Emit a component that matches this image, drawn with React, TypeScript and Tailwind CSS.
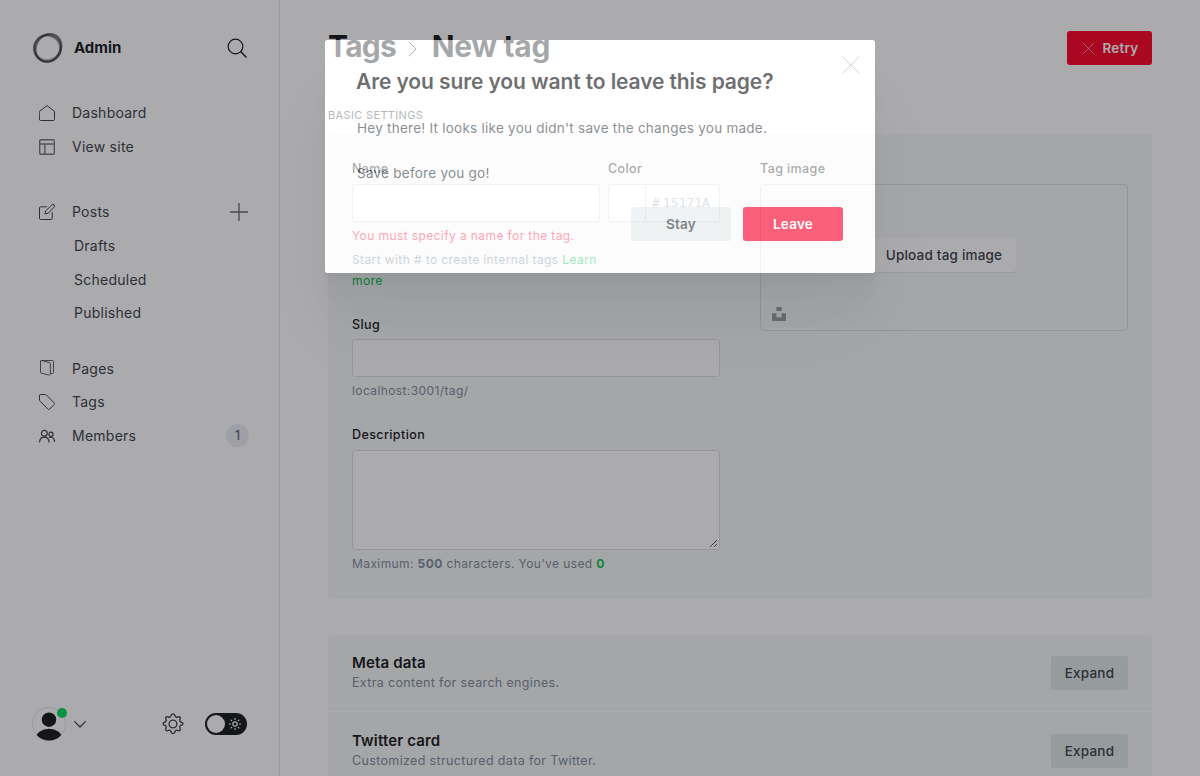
import React from "react";

const line = { fill: "none", stroke: "currentColor", strokeLinecap: "round", strokeLinejoin: "round" } as const;

function Logo() {
  return (
    <svg width="32" height="32" viewBox="0 0 32 32" fill="none" stroke="#15171a">
      <ellipse cx="15.4" cy="16.4" rx="13.6" ry="13.4" strokeWidth="1.8" opacity=".55" />
      <ellipse cx="17" cy="15.4" rx="14" ry="12.4" strokeWidth="1.8" opacity=".3" transform="rotate(-40 16 16)" />
      <ellipse cx="16.2" cy="16" rx="12.2" ry="14.2" strokeWidth="2" opacity=".3" transform="rotate(30 16 16)" />
      <ellipse cx="16.4" cy="16.2" rx="14.4" ry="11.9" strokeWidth="1.8" opacity=".25" transform="rotate(-62 16 16)" />
      <ellipse cx="15.1" cy="16.6" rx="12.5" ry="12.6" strokeWidth="1.2" opacity=".35" />
    </svg>
  );
}

const icons = {
  home: <path {...line} d="M.5 6.3 8 .6l7.5 5.7v8.2a1 1 0 0 1-1 1h-13a1 1 0 0 1-1-1z" />,
  site: (
    <g {...line} strokeWidth="1.4" opacity=".7">
      <rect x=".7" y=".7" width="14.6" height="14.6" rx="1.2" />
      <path d="M.7 5h14.6M5.8 5v10.3" />
    </g>
  ),
  posts: (
    <g {...line}>
      <path d="M7.5 2.8H1.6A1.1 1.1 0 0 0 .5 3.9v10.5a1.1 1.1 0 0 0 1.1 1.1h10.5a1.1 1.1 0 0 0 1.1-1.1V8.6" />
      <path d="m8.9 9.3-3 .7.7-3L12.9.9a1.5 1.5 0 0 1 2.2 2.2z" />
    </g>
  ),
  pages: (
    <g {...line} opacity=".85" transform="translate(0 -.5)">
      <path d="M1.5 1.500v11.300c0 .4.2.7.6.8l7.700 1.900c.9.200 1.600-.3 1.600-1.200V4.500c0-.7-.4-1.200-1.100-1.400L2.500 1" />
      <path d="M2.400 1h11.100c.6 0 1 .4 1 1v11c0 .6-.4 1-1 1h-2M2.400 1c-.5 0-.9.2-.9.700" />
    </g>
  ),
  tags: <path {...line} d="M.5 1.6V6c0 .4.2.8.5 1.1l7.8 7.9c.5.6 1.300.6 1.800.1l4.500-4.500c.5-.5.5-1.300 0-1.800L7.500 1C7.200.7 6.800.5 6.400.5H1.600C1 .5.5 1 .5 1.600z" />,
  members: (
    <g {...line} strokeWidth="1.2">
      <circle cx="5.3" cy="5.3" r="2.9" />
      <circle cx="12" cy="6.3" r="2.1" />
      <path d="M.6 13.900c.2-2.900 2.100-4.800 4.700-4.800s4.500 1.900 4.700 4.800M10.500 9.300c2.700-.8 4.900.9 5 4.100" />
    </g>
  ),
};

function NavItem({ icon, label, children }: { icon?: React.ReactNode; label: string; children?: React.ReactNode }) {
  return (
    <a className="flex h-[33.6px] items-center pl-[39px] pr-[31px] text-[14px] tracking-[.25px]">
      {icon ? (
        <>
          <svg width="16" height="16" viewBox="0 0 16 16" className="mr-[17px] shrink-0">{icon}</svg>
          <span>{label}</span>
        </>
      ) : (
        <span className="pl-[35px]">{label}</span>
      )}
      {children}
    </a>
  );
}

function Sidebar() {
  return (
    <nav className="flex w-[280px] shrink-0 flex-col border-r border-[#e3e6e9] text-[#394047]">
      <header className="flex h-24 items-center pl-8 pr-8">
        <Logo />
        <span className="ml-[10px] text-[15px] font-bold text-[#15171a]">Admin</span>
        <svg width="20" height="20" viewBox="0 0 20 20" className="ml-auto text-[#15171a]">
          <g {...line} strokeWidth="1.2">
            <circle cx="8.5" cy="8.5" r="7.3" />
            <path d="M13.8 13.8 19 19" strokeWidth="1.5" />
          </g>
        </svg>
      </header>
      <div className="mt-[.2px]">
        <NavItem icon={icons.home} label="Dashboard" />
        <NavItem icon={icons.site} label="View site" />
      </div>
      <div className="mt-[31.8px]">
        <NavItem icon={icons.posts} label="Posts">
          <svg width="18" height="18" viewBox="0 0 18 18" className="ml-auto">
            <path d="M9 .5v17M.5 9h17" {...line} strokeWidth="1.3" opacity=".8" />
          </svg>
        </NavItem>
        <NavItem label="Drafts" />
        <NavItem label="Scheduled" />
        <NavItem label="Published" />
      </div>
      <div className="mt-[22px]">
        <NavItem icon={icons.pages} label="Pages" />
        <NavItem icon={icons.tags} label="Tags" />
        <NavItem icon={icons.members} label="Members">
          <span className="-mr-px ml-auto flex size-[23px] items-center justify-center rounded-full bg-[#ebeef2] text-[13px] font-medium text-[#626d79]">1</span>
        </NavItem>
      </div>
      <footer className="mt-auto flex h-[104px] items-center pl-8 pr-8">
        <svg width="36" height="36" viewBox="0 0 36 36">
          <defs>
            <clipPath id="avatar"><circle cx="17" cy="18" r="16.5" /></clipPath>
          </defs>
          <circle cx="17" cy="18" r="16.5" fill="none" stroke="#e5e7ea" />
          <g clipPath="url(#avatar)" fill="#15171a">
            <circle cx="17" cy="13.7" r="7.2" />
            <ellipse cx="17" cy="32.3" rx="13" ry="9.5" />
          </g>
          <circle cx="30" cy="7" r="5" fill="#04d659" />
        </svg>
        <svg width="12" height="7" viewBox="0 0 12 7" className="ml-[6px]"><path {...line} strokeWidth="1.2" d="M.7.7 6 6 11.3.7" /></svg>
        <svg width="22" height="22" viewBox="0 0 24 24" className="ml-[76px]">
          <g {...line} strokeWidth="1.5">
            <circle cx="12" cy="12" r="4.2" />
            <path d="m10.100 2.300-.4 1.100a1.900 1.900 0 0 1-2.500 1.100l-1-.4a1.600 1.600 0 0 0-2.100 2.100l.4 1a1.900 1.900 0 0 1-1.100 2.600l-1.100.4a1.600 1.600 0 0 0 0 3l1.100.4a1.900 1.900 0 0 1 1.100 2.600l-.4 1a1.600 1.600 0 0 0 2.100 2.100l1-.4a1.900 1.900 0 0 1 2.500 1.100l.4 1.100a2 2 0 0 0 3.800 0l.4-1.100a1.900 1.900 0 0 1 2.500-1.100l1 .4a1.600 1.600 0 0 0 2.100-2.100l-.4-1a1.900 1.900 0 0 1 1.100-2.600l1.100-.4a1.600 1.600 0 0 0 0-3l-1.100-.4a1.900 1.900 0 0 1-1.100-2.600l.4-1a1.600 1.600 0 0 0-2.100-2.100l-1 .4a1.900 1.900 0 0 1-2.500-1.100l-.4-1.100a2 2 0 0 0-3.800 0z" />
          </g>
        </svg>
        <div className="ml-[21px] flex h-[22px] w-[42px] items-center rounded-full bg-[#15171a] pl-[2px] text-white">
          <span className="size-[18px] rounded-full bg-white" />
          <svg width="12" height="12" viewBox="0 0 12 12" className="ml-[4px]">
            <g {...line} strokeWidth="1.2">
              <circle cx="6" cy="6" r="2.2" />
              <path d="M6 .5v1M6 10.500v1M.5 6h1M10.500 6h1M2.100 2.100l.6.6M9.300 9.300l.6.6M2.100 9.900l.6-.6M9.300 2.700l.6-.6" />
            </g>
          </svg>
        </div>
      </footer>
    </nav>
  );
}

const label = "block h-[16px] text-[12.5px] font-medium leading-[17px] tracking-[.4px] text-[#15171a]";
const hint = "text-[12px] leading-[21px] tracking-[.4px] text-[#7c8b9a]";
const field = "rounded-[3px] border border-[#dddfe2] bg-white";

function SettingRow({ title, text, rowClass }: { title: string; text: string; rowClass: string }) {
  return (
    <div className={`flex shrink-0 items-center justify-between px-6 ${rowClass}`}>
      <div>
        <h4 className="text-[15px] font-semibold leading-5 tracking-[.15px] text-[#15171a]">{title}</h4>
        <p className="text-[12.5px] leading-5 tracking-[.35px] text-[#7c8b9a]">{text}</p>
      </div>
      <button className="h-[34px] w-[77px] rounded-[3px] bg-[#dfe6e8] text-[13.5px] font-medium tracking-[.2px] text-[#394047]">Expand</button>
    </div>
  );
}

function TagForm() {
  return (
    <main className="flex min-w-0 flex-1 flex-col px-12">
      <header className="flex h-[96px] shrink-0 items-center justify-between">
        <h2 className="-mt-[4px] flex items-center text-[30px] font-bold leading-[38px] tracking-[-.3px] text-[#15171a]">
          <span className="tracking-[-.7px]">Tags</span>
          <svg width="9" height="16" viewBox="0 0 9 16" className="ml-[12px] mr-[14.6px] mt-[5px] text-[#394047]"><path {...line} d="m1 1 7 7-7 7" /></svg>
          New tag
        </h2>
        <button className="flex h-[34px] w-[85px] items-center rounded-[3px] bg-[#fd0026] pl-4 text-[13.5px] font-semibold tracking-[.2px] text-white">
          <svg width="11" height="11" viewBox="0 0 11 11" className="mr-[8.5px]"><path {...line} strokeWidth=".8" d="m.5.5 10 10m0-10-10 10" opacity=".7" /></svg>
          Retry
        </button>
      </header>
      <h4 className="mt-[9px] h-[29px] shrink-0 text-[11px] leading-5 tracking-[.35px] text-[#394047]">BASIC SETTINGS</h4>
      <section className="flex h-[465px] shrink-0 gap-10 rounded-[3px] bg-[#f6f8f7] px-6 pt-[26px]">
        <div className="w-[368px]">
          <div className="flex gap-2">
            <div className="w-[248px]">
              <label className={label}>Name</label>
              <div className={`mt-2 h-[38px] ${field}`} />
              <p className="mt-[3px] text-[12px] leading-[21px] tracking-[.4px] text-[#ff0a35]">You must specify a name for the tag.</p>
              <p className={`mt-[3px] ${hint}`}>Start with # to create internal tags <a className="text-[#04c251]">Learn more</a></p>
            </div>
            <div className="w-[112px]">
              <label className={label}>Color</label>
              <div className={`mt-2 flex h-[38px] items-center ${field}`}>
                <span className="h-full w-[37px] border-r border-[#dddfe2]" />
                <span className="ml-[6px] font-['DejaVu_Sans_Mono',monospace] text-[13px] text-[#abb4be]">#</span>
                <span className="ml-[3px] font-['DejaVu_Sans_Mono',monospace] text-[13px] text-[#abb4be]">15171A</span>
              </div>
            </div>
          </div>
          <label className={`mt-[25px] ${label}`}>Slug</label>
          <div className={`mt-[7px] h-[38px] ${field}`} />
          <p className={`mt-[3px] ${hint}`}>localhost:3001/tag/</p>
          <label className={`mt-[25px] ${label}`}>Description</label>
          <div className={`mt-2 flex h-[100px] items-end justify-end p-[1px] ${field}`}>
            <svg width="9" height="9" viewBox="0 0 9 9"><path d="m1 8 7-7M5 8l3-3" stroke="#394047" strokeWidth=".9" /></svg>
          </div>
          <p className={`mt-[3px] ${hint}`}>Maximum: <b className="font-bold">500</b> characters. You’ve used <b className="font-bold text-[#04c251]">0</b></p>
        </div>
        <div className="w-[368px]">
          <label className={label}>Tag image</label>
          <div className="mt-2 flex h-[147px] flex-col items-center rounded-[3px] border border-[#dddfe2]">
            <button className="mt-[53px] h-[34px] w-[144px] shrink-0 rounded-[3px] bg-white text-[13.5px] font-medium tracking-[.2px] text-[#394047] shadow-[0_1px_1px_rgba(0,0,0,.08)]">Upload tag image</button>
            <svg width="14" height="14" viewBox="0 0 14 14" className="ml-[11px] mt-[35px] self-start" fill="#9b9da0"><path d="M4.400 0h5.200v4H4.400zM0 6.200h4.400v4h5.200v-4H14V14H0z" /></svg>
          </div>
        </div>
      </section>
      <section className="mt-9 flex shrink-0 flex-col rounded-[3px] bg-[#f6f8f7]">
        <SettingRow title="Meta data" text="Extra content for search engines." rowClass="h-[76px]" />
        <div className="h-px bg-white" />
        <SettingRow title="Twitter card" text="Customized structured data for Twitter." rowClass="h-[78px]" />
      </section>
    </main>
  );
}

function LeaveModal() {
  return (
    <div className="absolute left-[325px] top-10 h-[233px] w-[550px] rounded-[3px] shadow-[0_3px_3px_rgba(0,0,0,.008),0_7px_6px_rgba(0,0,0,.01),0_13px_10px_rgba(0,0,0,.012),0_22px_18px_rgba(0,0,0,.014),0_42px_34px_rgba(0,0,0,.017),0_60px_80px_rgba(0,0,0,.035),0_0_0_1200px_rgba(21,23,28,.36)]">
      <div className="flex h-full flex-col rounded-[3px] bg-white px-8 opacity-[.62]">
        <header className="flex justify-between">
          <h1 className="-ml-px mt-[27px] text-[21px] font-semibold leading-[30px] tracking-[-.1px] text-[#15171a]">Are you sure you want to leave this page?</h1>
          <svg width="18" height="18" viewBox="0 0 18 18" className="-mr-[17px] mt-4 text-[#394047]"><path {...line} strokeWidth=".6" d="m1 1 16 16m0-16L1 17" opacity=".6" /></svg>
        </header>
        <p className="mt-[20px] text-[13.5px] leading-[22px] tracking-[.25px] text-[#454c53]">Hey there! It looks like you didn't save the changes you made.</p>
        <p className="mt-[23px] text-[13.5px] leading-[22px] tracking-[.25px] text-[#454c53]">Save before you go!</p>
        <footer className="mt-[23px] flex justify-end gap-3">
          <button className="h-[34px] w-[100px] rounded-[3px] bg-[#e8edef] text-[13.5px] font-semibold tracking-[.2px] text-[#394047]">Stay</button>
          <button className="h-[34px] w-[100px] rounded-[3px] bg-[#ff042e] text-[13.5px] font-semibold tracking-[.2px] text-white">Leave</button>
        </footer>
      </div>
    </div>
  );
}

export default function App() {
  return (
    <div className="relative flex h-[776px] w-[1200px] overflow-hidden bg-white font-[Inter,'Liberation_Sans',sans-serif]">
      <Sidebar />
      <TagForm />
      <LeaveModal />
    </div>
  );
}
